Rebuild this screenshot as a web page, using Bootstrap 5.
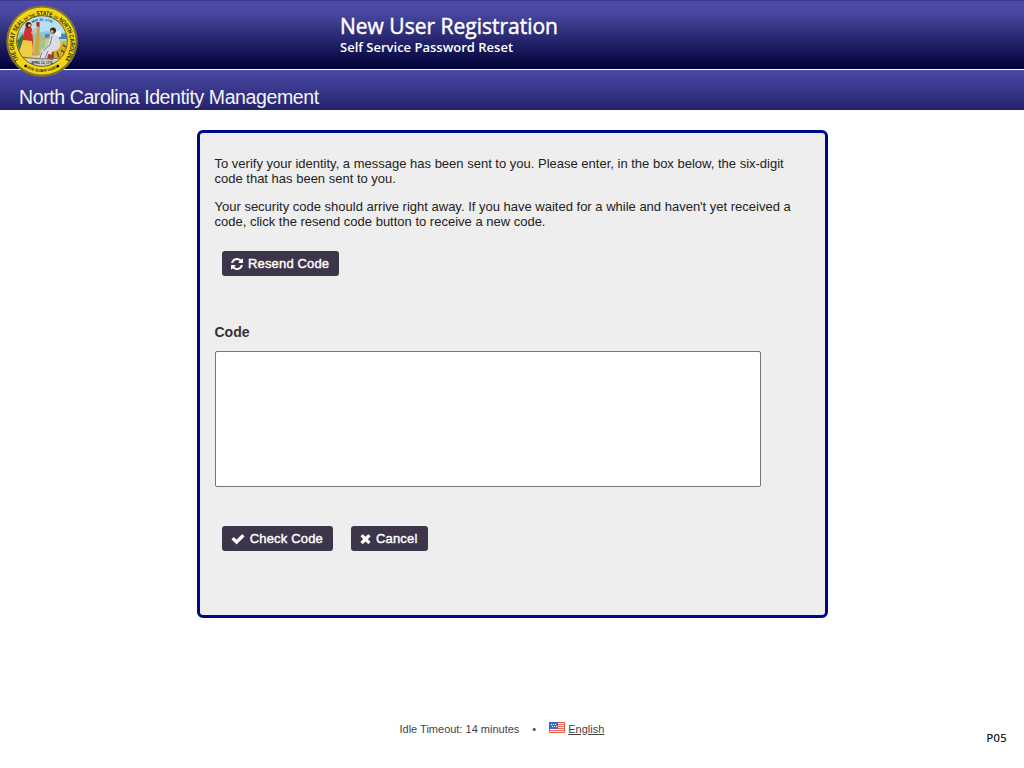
<!DOCTYPE html>
<html lang="en">
<head>
<meta charset="utf-8">
<meta name="viewport" content="width=device-width, initial-scale=1">
<title>New User Registration</title>
<link rel="stylesheet" href="https://cdn.jsdelivr.net/npm/bootstrap@5.3.0/dist/css/bootstrap.min.css">
<style>
body{font-family:"Liberation Sans",Arial,sans-serif;font-size:13px;line-height:15px;color:#222;height:768px;overflow:hidden}
.masthead{height:69px;background:linear-gradient(#4d4ba8 0,#4847a0 12px,#03033a 66px,#020230 69px);border-top:1px solid #3c3b8c;padding:13px 0 0 340px;font-family:"Open Sans",sans-serif}
.masthead h1{font-size:21px;line-height:24px;font-weight:400;-webkit-text-stroke:.45px #fff;white-space:nowrap}
.masthead h2{font-size:13px;line-height:15px;font-weight:600;white-space:nowrap;padding-top:2px}
.subhead{height:41px;background:linear-gradient(#4b4aa7,#24236b);border-top:1px solid #fff;padding:16px 0 0 19px}
.subhead span{font-size:19.5px;line-height:23px;letter-spacing:-.4px;color:#f4f4fc;white-space:nowrap}
.seal{left:5px;top:5px}
.panel{width:631px;height:488px;margin:20px auto 0 197px;border:3px solid #00088a;border-radius:6px;background:#eee;padding:23px 15px 0}
.panel p{margin:0 0 13px -.5px;white-space:nowrap}
.act{background:#3d3549;color:#fff;height:25px;padding:0 9px;font-size:13px;line-height:25px;border:0;border-radius:3px;letter-spacing:.16px;white-space:nowrap;-webkit-text-stroke:.4px #fff}
.act:hover{background:#3d3549;color:#fff}
.codebox{width:546px;height:136px;border:1px solid #767676;border-radius:2px;resize:none;background:#fff}
.code-label{font-size:14px;line-height:16px;color:#333}
.foot{font-size:11px;line-height:14px;color:#444;margin:104px 0 0 399.5px}
.foot a{color:#444}
.pageid{right:17px;top:731px;font:11px/14px "Open Sans",sans-serif;letter-spacing:.4px;color:#000;-webkit-text-stroke:.2px #000}
</style>
</head>
<body class="bg-white position-relative">
<header class="position-relative">
  <div class="masthead text-white">
    <h1 class="m-0">New User Registration</h1>
    <h2 class="m-0">Self Service Password Reset</h2>
  </div>
  <div class="subhead"><span>North Carolina Identity Management</span></div>
  <svg class="seal position-absolute" width="74" height="73" viewBox="0 0 74 73" aria-label="State seal">
    <defs>
      <path id="arcTop" d="M15.400 56.700A28.200 28.200 0 1 1 58.600 56.700"/>
      <path id="arcBottom" d="M15.5 58.5A32 32 0 0 0 58.5 58.5"/>
      <path id="arcIn" d="M22 22A21 21 0 0 1 52 22"/>
      <clipPath id="disc"><circle cx="37" cy="36" r="25"/></clipPath>
    </defs>
    <circle cx="37" cy="36.3" r="35.8" fill="#85752c"/>
    <circle cx="37" cy="36" r="33.6" fill="#f2d614"/>
    <circle cx="37" cy="36" r="25.6" fill="#a28c28"/>
    <g clip-path="url(#disc)">
      <rect x="10" y="10" width="54" height="54" fill="#b4e0f6"/>
      <path d="M10 29l12-3 8 2 12-2 10 2 12-1v6H10z" fill="#8ec4d4"/>
      <path d="M40 29h24v5H40z" fill="#3c8cc4"/>
      <path d="M10 33h30v20H10z" fill="#a5c489"/>
      <path d="M40 34h24v18H40z" fill="#b9cfa4"/>
      <path d="M10 49l15 2 13-1 26-1v15H10z" fill="#cfcec8"/>
      <path d="M18 29l-6 7 2 10 8-5z" fill="#3f7545"/>
      <path d="M49 27l7-2v7h-7z" fill="#e4f2f2"/>
      <path d="M32 21h3l-1 29-5 1z" fill="#c9a944"/>
      <path d="M31.500 17h3v4.500h-3z" fill="#b52125"/>
      <path d="M20 23q4-5 7 1l1 12v14l-12-2 2-15z" fill="#d22f2d"/>
      <path d="M18 35l9 1 1 9-1 8-9 1-4-7z" fill="#f0cc45"/>
      <path d="M26 27l6-5 1 1-6 7z" fill="#e5b087"/>
      <circle cx="23.500" cy="20" r="3" fill="#4a2818"/><circle cx="24.500" cy="20.500" r="1.600" fill="#dfaa82"/>
      <path d="M45 29l8 1 3 12 4 5-7 8-19-1 2-9 7-4z" fill="#dddce6"/>
      <path d="M47 31l-2 9-7 6m-1 1l-2 6m8-7l-3 7" stroke="#757084" stroke-width=".9" fill="none"/>
      <path d="M45 33l-8 1-2-3" stroke="#d7a17a" stroke-width="1.600" fill="none"/>
      <circle cx="48" cy="25.500" r="3" fill="#3a2620"/><circle cx="47" cy="26.500" r="1.600" fill="#dfaa82"/>
      <path d="M60 36q3 10-4 16-6 3-11 0l2-6q7 1 10-9z" fill="#d8ac20"/>
      <path d="M58 40l3 2m-5 3l4 3m-8-1l2 5m-6-5v5" stroke="#4d3b18" stroke-width="1.300"/>
      <path d="M43 49l6 1-1 5-6-1z" fill="#a83a26"/>
      <path d="M15 52l22 2 21-1" stroke="#6d6f4d" fill="none"/>
    </g>
    <circle cx="37" cy="36" r="25.300" fill="none" stroke="#514720" stroke-width=".7"/>
    <g font-family="Liberation Sans,sans-serif" font-weight="700" fill="#29250a" text-anchor="middle">
      <text font-size="6.400"><textPath href="#arcTop" startOffset="50%" textLength="123" lengthAdjust="spacingAndGlyphs">THE GREAT SEAL <tspan font-size="4.200">OF THE</tspan> STATE <tspan font-size="4.200">OF</tspan> NORTH CAROLINA</textPath></text>
      <text font-size="3.800"><textPath href="#arcBottom" startOffset="50%">ESSE QUAM VIDERI</textPath></text>
      <text font-size="3.200"><textPath href="#arcIn" startOffset="50%">MAY 20, 1775</textPath></text>
      <text x="37" y="58.700" font-size="3">APRIL 12, 1776</text>
    </g>
    <circle cx="20.500" cy="61" r="1.200"/><circle cx="53" cy="61" r="1.200"/>
  </svg>
</header>
<main class="panel">
  <p>To verify your identity, a message has been sent to you. Please enter, in the box below, the six-digit<br>code that has been sent to you.</p>
  <p>Your security code should arrive right away. If you have waited for a while and haven't yet received a<br>code, click the resend code button to receive a new code.</p>
  <div class="d-flex" style="margin:22px 0 0 7px">
    <button class="btn act d-flex align-items-center" type="button" style="width:117px;gap:5px"><svg width="12" height="12" viewBox="0 0 1536 1536" fill="#fff"><path d="M1511 928q0 5-1 7-64 268-268 434.500T764 1536q-146 0-282.500-55T238 1324l-129 129q-19 19-45 19t-45-19-19-45V960q0-26 19-45t45-19h448q26 0 45 19t19 45-19 45l-137 137q71 66 161 102t187 36q134 0 250-65t186-179q11-17 53-117 8-23 30-23h192q13 0 22.500 9.500t9.500 22.500zm25-800v448q0 26-19 45t-45 19h-448q-26 0-45-19t-19-45 19-45l138-138Q969 256 768 256q-134 0-250 65T332 500q-11 17-53 117-8 23-30 23H50q-13 0-22.500-9.500T18 608v-7q65-268 270-434.500T768 0q146 0 284 55.500T1297 212l130-129q19-19 45-19t45 19 19 45z"/></svg>Resend Code</button>
  </div>
  <label for="code" class="code-label fw-bold d-block" style="margin:48px 0 11px -.5px">Code</label>
  <textarea id="code" class="codebox d-block"></textarea>
  <div class="d-flex" style="margin:39px 0 0 7px;gap:18px">
    <button class="btn act d-flex align-items-center" type="button" style="width:111px;gap:4.800px"><svg width="14" height="14" viewBox="0 0 1792 1792" fill="#fff" stroke="#fff" stroke-width="60"><path d="M1671 566q0 40-28 68l-724 724-136 136q-28 28-68 28t-68-28l-136-136-362-362q-28-28-28-68t28-68l136-136q28-28 68-28t68 28l294 295 656-657q28-28 68-28t68 28l136 136q28 28 28 68z"/></svg>Check Code</button>
    <button class="btn act d-flex align-items-center" type="button" style="width:77px;gap:5px"><svg width="11" height="14" viewBox="192 50 1408 1792" fill="#fff" stroke="#fff" stroke-width="50"><path d="M1490 1322q0 40-28 68l-136 136q-28 28-68 28t-68-28l-294-294-294 294q-28 28-68 28t-68-28l-136-136q-28-28-28-68t28-68l294-294-294-294q-28-28-28-68t28-68l136-136q28-28 68-28t68 28l294 294 294-294q28-28 68-28t68 28l136 136q28 28 28 68t-28 68l-294 294 294 294q28 28 28 68z"/></svg>Cancel</button>
  </div>
</main>
<footer class="foot d-flex align-items-center">
  <span>Idle Timeout: 14 minutes</span>
  <span style="margin:0 12.500px 0 13px">•</span>
  <svg width="16" height="11" viewBox="0 0 16 11" style="margin:-4px 3.500px 0 0"><path fill="#f5f0ed" d="M0 0h16v11H0z"/><path d="M1 2.500h14M1 4.500h14M1 6.500h14M1 8.500h14" stroke="#ef6a5a"/><path fill="#3a6fd0" d="M1 1h8v6H1z"/><path d="M2 2.500h6M3 4.500h6" stroke="#fff" stroke-dasharray="1 1"/><path d="M.5 .5h15v10H.5z" fill="none" stroke="#e0603c"/><path d="M.5 7V.5H9" fill="none" stroke="#3a65c4"/></svg>
  <a href="#" class="text-decoration-underline">English</a>
</footer>
<div class="pageid position-absolute">P05</div>
<script src="https://cdn.jsdelivr.net/npm/bootstrap@5.3.0/dist/js/bootstrap.bundle.min.js"></script>
</body>
</html>
